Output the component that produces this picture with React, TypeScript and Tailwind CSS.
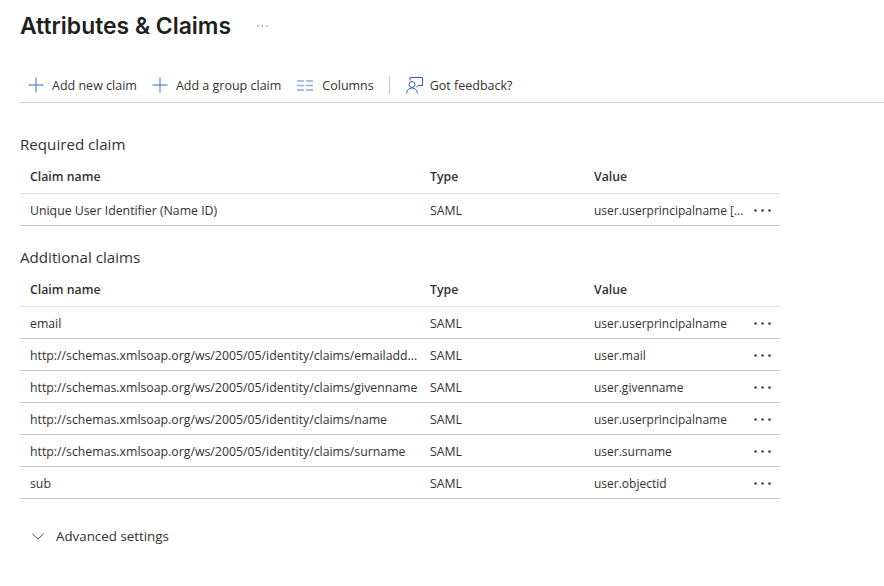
import React from "react";

const required = [["Unique User Identifier (Name ID)", "SAML", "user.userprincipalname [..."]];

const additional = [
  ["email", "SAML", "user.userprincipalname"],
  ["http://schemas.xmlsoap.org/ws/2005/05/identity/claims/emailadd...", "SAML", "user.mail"],
  ["http://schemas.xmlsoap.org/ws/2005/05/identity/claims/givenname", "SAML", "user.givenname"],
  ["http://schemas.xmlsoap.org/ws/2005/05/identity/claims/name", "SAML", "user.userprincipalname"],
  ["http://schemas.xmlsoap.org/ws/2005/05/identity/claims/surname", "SAML", "user.surname"],
  ["sub", "SAML", "user.objectid"],
];

function PlusIcon() {
  return (
    <svg width="16" height="16" viewBox="0 0 16 16" fill="none" stroke="#6f97d6" strokeWidth="1.4">
      <path d="M8 0.5V15.5M0.5 8H15.5" />
    </svg>
  );
}

function ColumnsIcon() {
  return (
    <svg width="16" height="11" viewBox="0 0 16 11" fill="none" stroke="#8fadde" strokeWidth="1.5">
      <path d="M0 1H7M9 1H16M0 5.5H7M9 5.5H16M0 10H7M9 10H16" />
    </svg>
  );
}

function FeedbackIcon() {
  return (
    <svg width="17" height="17" viewBox="0 0 17 17" fill="none" stroke="#2f5fb5" strokeWidth="1">
      <path d="M4 3.5V0.5H16.5V8.5H12.5L10.5 10" />
      <circle cx="6" cy="7.5" r="3" />
      <path d="M0.5 16.5C1 13 3 11 6 11C9 11 11 13 11.5 16.5" />
    </svg>
  );
}

function Dots() {
  return (
    <svg width="17" height="3" viewBox="0 0 17 3" fill="#3b3a39">
      <circle cx="1.5" cy="1.5" r="1.25" />
      <circle cx="8.5" cy="1.5" r="1.25" />
      <circle cx="15.5" cy="1.5" r="1.25" />
    </svg>
  );
}

function ClaimTable({ title, rows }: { title: string; rows: string[][] }) {
  return (
    <section className="w-[760px]">
      <h2 className="h-[21px] text-[15.15px] leading-[21px] text-[#323130]">{title}</h2>
      <div className="flex h-[39px] items-center border-b border-[#e4e3e2] pl-[10px] pt-[7px] text-[12.3px] font-semibold text-[#323130]">
        <div className="w-[400px]">Claim name</div>
        <div className="w-[164px]">Type</div>
        <div>Value</div>
      </div>
      {rows.map((r) => (
        <div key={r[0]} className="flex h-[32px] items-center border-b border-[#c8c6c4] pl-[10px] pt-[2px] text-[12.3px] text-[#323130]">
          <div className="w-[400px] whitespace-nowrap pt-[2px]">{r[0]}</div>
          <div className="w-[164px] pt-[2px]">{r[1]}</div>
          <div className="w-[160px] whitespace-nowrap text-[12px]">{r[2]}</div>
          <Dots />
        </div>
      ))}
    </section>
  );
}

export default function App() {
  return (
    <div className="min-h-[586px] w-[884px] bg-white pl-[20px] pt-[12px] font-['Open_Sans','Liberation_Sans',sans-serif]">
      <div className="flex h-[28px] items-center">
        <h1 className="font-['Inter',sans-serif] text-[22.9px] font-semibold text-[#201f1e]">Attributes &amp; Claims</h1>
        <svg className="ml-[26px]" width="11" height="2" viewBox="0 0 11 2" fill="#777574">
          <circle cx="1" cy="1" r="0.7" />
          <circle cx="5.5" cy="1" r="0.7" />
          <circle cx="10" cy="1" r="0.7" />
        </svg>
      </div>
      <div className="mt-[28px] flex h-[35px] items-center border-b border-[#d0cfce] pl-[8px] text-[12.5px] text-[#323130]">
        <PlusIcon />
        <span className="ml-[8px] pt-[2px]">Add new claim</span>
        <span className="ml-[15px] flex items-center"><PlusIcon /></span>
        <span className="ml-[8px] pt-[2px]">Add a group claim</span>
        <span className="ml-[16px] flex items-center"><ColumnsIcon /></span>
        <span className="ml-[9px] pt-[2px]">Columns</span>
        <span className="ml-[15px] h-[18px] w-px bg-[#c8c6c4]" />
        <span className="ml-[16px] flex items-center"><FeedbackIcon /></span>
        <span className="ml-[7px] pt-[2px]">Got feedback?</span>
      </div>
      <div className="mt-[31px]">
        <ClaimTable title="Required claim" rows={required} />
      </div>
      <div className="mt-[21px]">
        <ClaimTable title="Additional claims" rows={additional} />
      </div>
      <div className="mt-[27px] flex h-[20px] items-center pl-[12px] text-[13.35px] text-[#323130]">
        <svg width="12" height="7" viewBox="0 0 12 7" fill="none" stroke="#4a4948" strokeWidth="1">
          <path d="M0.5 0.8L6 6.2L11.5 0.8" />
        </svg>
        <span className="ml-[12px]">Advanced settings</span>
      </div>
    </div>
  );
}
